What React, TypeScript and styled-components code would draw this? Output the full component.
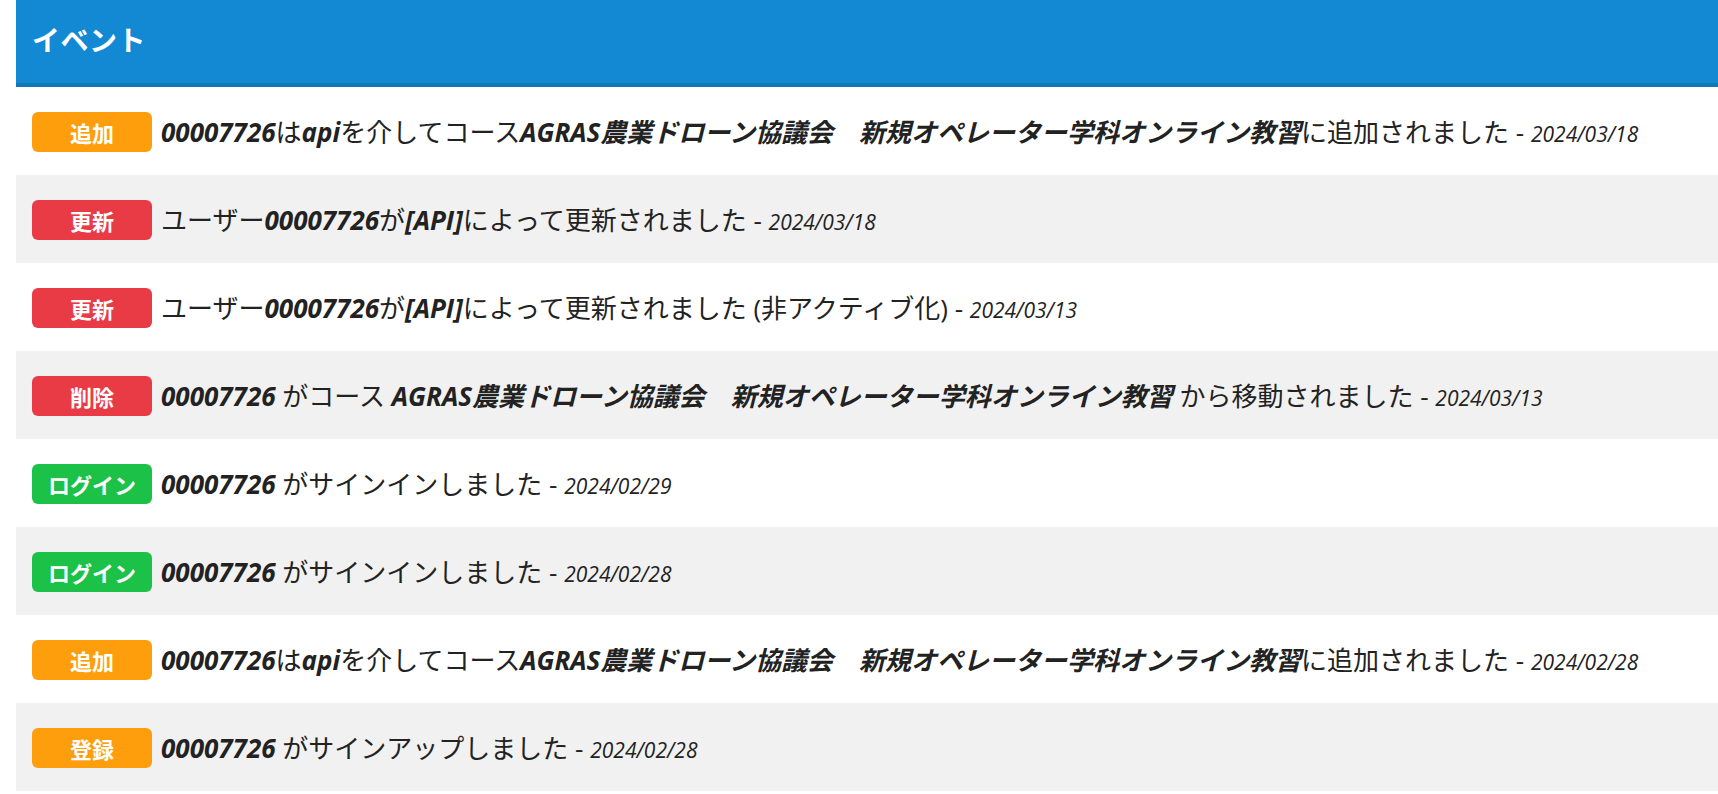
import React from "react";
import styled, { createGlobalStyle } from "styled-components";

const Global = createGlobalStyle`
  html, body { margin: 0; padding: 0; background: #ffffff; }
  body { font-family: "Open Sans", "Noto Sans CJK JP", sans-serif; color: #222222; }
`;

const Page = styled.div`
  padding-left: 16px;
`;

const Panel = styled.section`
  display: flex;
  flex-direction: column;
`;

const Header = styled.header`
  height: 77px;
  background: #1389d3;
  border-bottom: 4px solid #1277b6;
  display: flex;
  align-items: center;
  padding: 0 16px 6px;
  box-sizing: content-box;
`;

const Title = styled.h2`
  margin: 0;
  color: #ffffff;
  font-size: 28px;
  font-weight: 700;
  font-family: "Noto Sans CJK JP", "Open Sans", sans-serif;
  letter-spacing: 0.5px;
`;

const List = styled.ul`
  list-style: none;
  margin: 0;
  padding: 0;
`;

const Row = styled.li`
  height: 88px;
  display: flex;
  align-items: center;
  gap: 9px;
  padding: 0 16px;
  &:nth-child(even) { background: #f1f1f1; }
`;

type Kind = "add" | "update" | "delete" | "login" | "signup";

const badgeColors: Record<Kind, string> = {
  add: "#ff9e0d",
  update: "#e83b45",
  delete: "#e83b45",
  login: "#1cc247",
  signup: "#ff9e0d",
};

const Badge = styled.span<{ $kind: Kind }>`
  flex: none;
  width: 120px;
  height: 40px;
  border-radius: 6px;
  background: ${(p) => badgeColors[p.$kind]};
  color: #ffffff;
  font-family: "Noto Sans CJK JP", sans-serif;
  font-weight: 700;
  font-size: 22px;
  display: flex;
  align-items: center;
  justify-content: center;
  margin-top: 2px;
`;

const Text = styled.p`
  margin: 0;
  font-size: 26px;
  white-space: nowrap;
  font-family: "Open Sans", "Noto Sans CJK JP", sans-serif;
  color: #222222;
`;

const Em = styled.b`
  font-weight: 700;
  font-style: italic;
`;

const DateText = styled.i`
  font-size: 21px;
  font-style: italic;
`;

type Ev = { kind: Kind; label: string; body: React.ReactNode; date: string };

const ID = "00007726";
const COURSE = "AGRAS農業ドローン協議会　新規オペレーター学科オンライン教習";

const events: Ev[] = [
  {
    kind: "add",
    label: "追加",
    body: (
      <>
        <Em>{ID}</Em>は<Em>api</Em>を介してコース<Em>{COURSE}</Em>に追加されました
      </>
    ),
    date: "2024/03/18",
  },
  {
    kind: "update",
    label: "更新",
    body: (
      <>
        ユーザー<Em>{ID}</Em>が<Em>[API]</Em>によって更新されました
      </>
    ),
    date: "2024/03/18",
  },
  {
    kind: "update",
    label: "更新",
    body: (
      <>
        ユーザー<Em>{ID}</Em>が<Em>[API]</Em>によって更新されました (非アクティブ化)
      </>
    ),
    date: "2024/03/13",
  },
  {
    kind: "delete",
    label: "削除",
    body: (
      <>
        <Em>{ID}</Em> がコース <Em>{COURSE}</Em> から移動されました
      </>
    ),
    date: "2024/03/13",
  },
  {
    kind: "login",
    label: "ログイン",
    body: (
      <>
        <Em>{ID}</Em> がサインインしました
      </>
    ),
    date: "2024/02/29",
  },
  {
    kind: "login",
    label: "ログイン",
    body: (
      <>
        <Em>{ID}</Em> がサインインしました
      </>
    ),
    date: "2024/02/28",
  },
  {
    kind: "add",
    label: "追加",
    body: (
      <>
        <Em>{ID}</Em>は<Em>api</Em>を介してコース<Em>{COURSE}</Em>に追加されました
      </>
    ),
    date: "2024/02/28",
  },
  {
    kind: "signup",
    label: "登録",
    body: (
      <>
        <Em>{ID}</Em> がサインアップしました
      </>
    ),
    date: "2024/02/28",
  },
];

export default function App() {
  return (
    <Page>
      <Global />
      <Panel>
        <Header>
          <Title>イベント</Title>
        </Header>
        <List>
          {events.map((e, i) => (
            <Row key={i}>
              <Badge $kind={e.kind}>{e.label}</Badge>
              <Text>
                {e.body} - <DateText>{e.date}</DateText>
              </Text>
            </Row>
          ))}
        </List>
      </Panel>
    </Page>
  );
}
